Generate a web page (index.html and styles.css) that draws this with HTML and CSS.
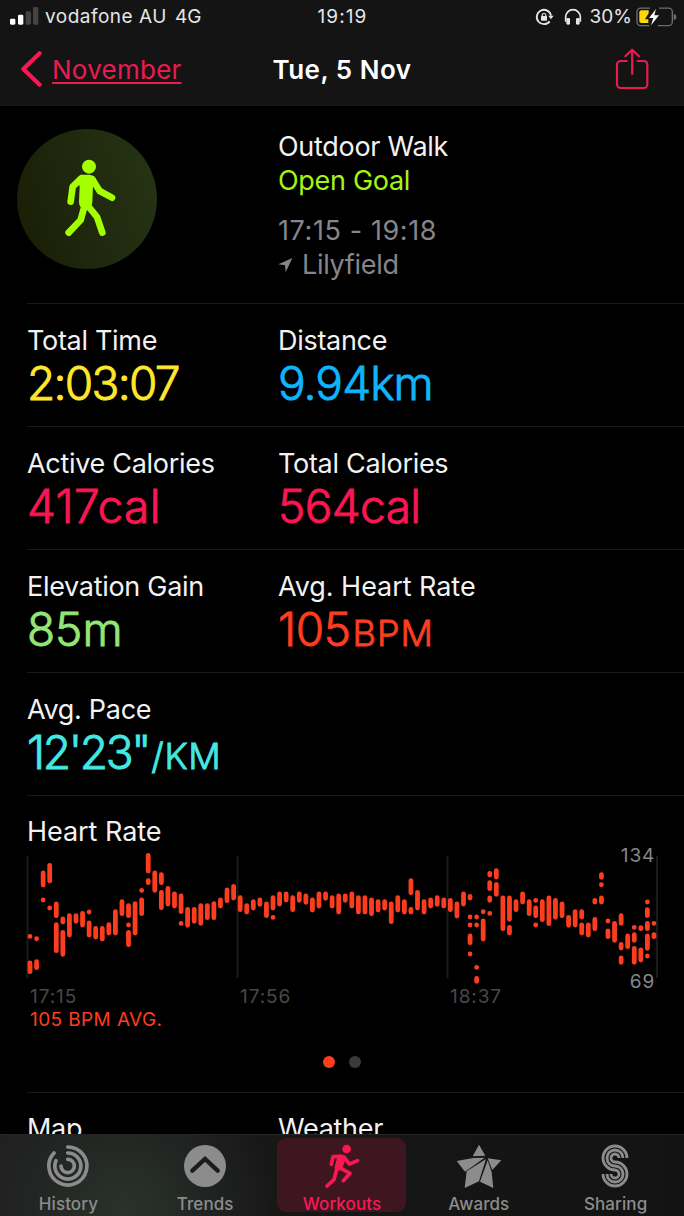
FILE: index.html
```html
<!DOCTYPE html>
<html lang="en">

<head>
    <meta charset="UTF-8">
    <meta name="viewport" content="width=device-width, initial-scale=1.0">
    <title>Outdoor Walk</title>
    <link rel="stylesheet" href="styles.css">
</head>

<body>
    <header>
        <div class="status">
            <div class="status-left">
                <svg class="signal" width="29" height="18" viewBox="0 0 87 54">
                    <rect x="0" y="35" width="16" height="18" rx="4" fill="#fff" />
                    <rect x="24" y="23" width="16" height="30" rx="4" fill="#fff" />
                    <rect x="47" y="13" width="16" height="40" rx="4" fill="#434343" />
                    <rect x="69" y="0" width="16" height="53" rx="4" fill="#434343" />
                </svg>
                <span class="carrier">vodafone AU</span>
                <span class="network">4G</span>
            </div>
            <span class="clock">19:19</span>
            <div class="status-right">
                <svg class="lock" width="19" height="18" viewBox="578 23 57 54" fill="none" stroke="#e6e6e6" stroke-width="5.500">
                    <path d="M626 46A21.500 21.500 0 1 0 622 63" />
                    <path d="M618 46h16l-8 11z" fill="#e6e6e6" stroke="none" />
                    <rect x="596" y="47" width="18" height="14" rx="2" fill="#e6e6e6" stroke="none" />
                    <path d="M599.500 49v-4a5.500 5.500 0 0 1 11 0v4" stroke-width="3.500" />
                </svg>
                <svg class="phones" width="18" height="18" viewBox="664 23 54 54" fill="none" stroke="#e6e6e6" stroke-width="5">
                    <path d="M669 64V50a22 22 0 0 1 44 0v14" />
                    <rect x="671" y="53" width="11" height="20" rx="4" fill="#e6e6e6" stroke="none" />
                    <rect x="700" y="53" width="11" height="20" rx="4" fill="#e6e6e6" stroke="none" />
                </svg>
                <span class="percent">30%</span>
                <svg width="41" height="20" viewBox="879 20 123 60">
                    <path d="M921 23.500H893a11 11 0 0 0-11 11V65a11 11 0 0 0 11 11h26M948 23.500h29a11 11 0 0 1 11 11V65a11 11 0 0 1-11 11h-32" fill="none" stroke="#6e6e6e" stroke-width="4" />
                    <path d="M992 41q8 1 8 9t-8 9z" fill="#6e6e6e" />
                    <path d="M895 30h22v9l-11 18h10v11h-21q-6 0-6-6V36q0-6 6-6z" fill="#ffd60a" />
                    <path d="M939 26l-21 27h13l-7 22 24-30h-14z" fill="#fff" />
                </svg>
            </div>
        </div>
        <nav>
            <a class="back" href="#">
                <svg width="21" height="36" viewBox="64 156 63 108">
                    <path d="M120 163L71 210l49 47" fill="none" stroke="#fa1852" stroke-width="12.500" stroke-linecap="round" stroke-linejoin="round" />
                </svg>
                <span>November</span>
            </a>
            <h1>Tue, 5 Nov</h1>
            <a class="share" href="#">
                <svg width="34" height="42" viewBox="818 144 102 126" fill="none" stroke="#e91c50" stroke-width="6.500" stroke-linecap="round" stroke-linejoin="round">
                    <path d="M853 183H835a11 11 0 0 0-11 11v59a11 11 0 0 0 11 11h69a11 11 0 0 0 11-11v-59a11 11 0 0 0-11-11H886" />
                    <path d="M869.500 222V150M849 169l20.500-20 20.500 20" />
                </svg>
            </a>
        </nav>
    </header>

    <main>
        <section class="summary">
            <svg class="badge" width="140" height="140" viewBox="51 42 420 420">
                <defs>
                    <linearGradient id="badgeFill" x1="0" y1="0.6" x2="1" y2="0.3">
                        <stop offset="0" stop-color="#1a1f06" />
                        <stop offset="1" stop-color="#263315" />
                    </linearGradient>
                </defs>
                <circle cx="261" cy="252" r="210" fill="url(#badgeFill)" />
                <g fill="#a4ff00">
                    <circle cx="267" cy="155" r="21" />
                    <path d="M244 179h24q14 1 20 13l-9 20-2 50q-1 14-14 18h-14q-12-3-12-20l2-45-8-26z" />
                </g>
                <g fill="none" stroke="#a4ff00" stroke-width="20" stroke-linecap="round" stroke-linejoin="round">
                    <path d="M244 190l-26 25-6 45" />
                    <path d="M277 193l22 35 37 20" />
                    <path d="M254 272l-12 43-36 38" />
                    <path d="M261 269l30 37 16 47" />
                </g>
            </svg>
            <div class="summary-text">
                <div class="label">Outdoor Walk</div>
                <div class="label goal">Open Goal</div>
                <div class="label when">17:15 - 19:18</div>
                <div class="label place">
                    <svg width="15" height="16" viewBox="0 0 45 48">
                        <path d="M43 3L1 22l20 3 2 21z" fill="#86868a" />
                    </svg>
                    <span>Lilyfield</span>
                </div>
            </div>
        </section>

        <section class="row">
            <div>
                <div class="label">Total Time</div>
                <div class="value time">2:03:07</div>
            </div>
            <div>
                <div class="label">Distance</div>
                <div class="value distance">9.94km</div>
            </div>
        </section>
        <section class="row">
            <div>
                <div class="label">Active Calories</div>
                <div class="value calories">417cal</div>
            </div>
            <div>
                <div class="label">Total Calories</div>
                <div class="value calories total">564cal</div>
            </div>
        </section>
        <section class="row">
            <div>
                <div class="label">Elevation Gain</div>
                <div class="value elevation">85m</div>
            </div>
            <div>
                <div class="label rate-label">Avg. Heart Rate</div>
                <div class="value bpm">105<small>BPM</small></div>
            </div>
        </section>
        <section class="row">
            <div>
                <div class="label">Avg. Pace</div>
                <div class="value pace">12'23"<small>/KM</small></div>
            </div>
        </section>

        <section class="heart">
            <div class="label rate-label">Heart Rate</div>
            <svg class="chart" width="640" height="162" viewBox="0 0 640 162">
                <path class="grid" d="M7.500 11V133M217.500 11V133M427.500 11V133M637 11V133" />
                <path id="beats" class="beats" />
                <text class="tick" x="10" y="158">17:15</text>
                <text class="tick" x="220" y="158">17:56</text>
                <text class="tick" x="430" y="158">18:37</text>
                <text class="bound" x="635" y="17" text-anchor="end">134</text>
                <text class="bound" x="635" y="143" text-anchor="end">69</text>
            </svg>
            <div class="average">105 BPM AVG.</div>
            <div class="pager"><i class="on"></i><i></i></div>
        </section>

        <section class="row more">
            <div class="label">Map</div>
            <div class="label">Weather</div>
        </section>
    </main>

    <footer>
        <a class="tab" href="#">
            <svg width="44" height="44" viewBox="139 177 132 132" fill="none" stroke="#8c8c8c" stroke-width="11" stroke-linecap="round">
                <path d="M204 186A57 57 0 1 1 163 204" />
                <path d="M204 204A39 39 0 1 1 169 227" />
                <path d="M204 223A20 20 0 1 1 184 243" />
            </svg>
            <span>History</span>
        </a>
        <a class="tab" href="#">
            <svg width="44" height="44" viewBox="550 177 132 132">
                <circle cx="616" cy="243" r="63" fill="#8c8c8c" />
                <path d="M578 257l38-35 38 35" fill="none" stroke="#1b1c1b" stroke-width="13" stroke-linecap="round" />
            </svg>
            <span>Trends</span>
        </a>
        <a class="tab active" href="#">
            <svg width="44" height="44" viewBox="27 22 132 132">
                <g fill="#fa1852">
                    <circle cx="107" cy="37" r="13" />
                    <path d="M80 54h16q10 2 10 10l-9 22-4 14-18 4-5-10 8-30z" />
                </g>
                <g fill="none" stroke="#fa1852" stroke-width="11" stroke-linecap="round" stroke-linejoin="round">
                    <path d="M88 59l-22 1-5 23" />
                    <path d="M100 63l15 19 25-10" />
                    <path d="M78 95l-9 34-21 19" />
                    <path d="M86 93l31 17-20 22" />
                </g>
            </svg>
            <span>Workouts</span>
        </a>
        <a class="tab" href="#">
            <svg width="46" height="44" viewBox="339 179 138 132" fill="#8c8c8c">
                <path d="M408 181l19 33-38 2z" />
                <path d="M341 230l50-9 34-1-59 42z" />
                <path d="M371 261l58-37-21 67-43 20z" />
                <path d="M434 228l12 36 5 47-40-19z" />
                <path d="M434 222l41 6-27 29z" />
            </svg>
            <span>Awards</span>
        </a>
        <a class="tab" href="#">
            <svg width="44" height="44" viewBox="754 178 132 132" fill="none" stroke="#8c8c8c" stroke-width="8.500">
                <path d="M853 220A36 36 0 1 0 817 256A12 12 0 1 1 805 268" />
                <path d="M841 220A24 24 0 1 0 817 244A24 24 0 1 1 793 268" />
                <path d="M829 220A12 12 0 1 0 817 232A36 36 0 1 1 781 268" />
            </svg>
            <span>Sharing</span>
        </a>
    </footer>

    <script src="chart.js"></script>
</body>

</html>
```

FILE: styles.css
```css
* {
    box-sizing: border-box;
}

body {
    margin: 0;
    width: 684px;
    height: 1216px;
    display: flex;
    flex-direction: column;
    overflow: hidden;
    background-color: #000;
    color: #f2f2f2;
    font-family: Inter, "Liberation Sans", sans-serif;
}

a {
    color: inherit;
    text-decoration: none;
}

svg {
    display: block;
    flex: none;
}

/* top bars */
header {
    height: 106px;
    background-color: #141414;
    border-bottom: 1px solid #191919;
    flex: none;
}

.status {
    display: grid;
    grid-template-columns: 1fr auto 1fr;
    align-items: center;
    height: 33px;
    padding: 0 7px 0 10px;
    font-size: 19px;
    color: #e6e6e6;
}

.status-left,
.status-right {
    display: flex;
    align-items: center;
}

.status-right {
    justify-content: flex-end;
}

.signal {
    margin-right: 6px;
    margin-top: -1px;
}

.carrier {
    letter-spacing: 0.5px;
    margin-right: 8px;
}

.clock {
    margin-right: 2px;
    letter-spacing: 1.1px;
}

.phones {
    margin: 0 8px 0 10px;
}

.percent {
    margin-right: 4px;
}

nav {
    display: grid;
    grid-template-columns: 1fr auto 1fr;
    align-items: center;
    height: 72px;
    padding: 0 35px 0 21px;
}

.back {
    display: flex;
    align-items: center;
    gap: 10px;
    color: #e91c50;
    font-size: 26px;
    letter-spacing: 0.25px;
    text-decoration: underline;
    text-decoration-thickness: 2px;
    text-underline-offset: 3px;
}

h1 {
    margin: 0 0 0 14px;
    font-size: 26px;
    font-weight: 600;
    letter-spacing: 0.5px;
    color: #fff;
}

.share {
    justify-self: end;
}

/* workout details */
main {
    flex: 1;
    min-height: 0;
    overflow: hidden;
}

.summary {
    display: flex;
    height: 197px;
    padding: 23px 0 0 17px;
}

.summary-text {
    margin: 1px 0 0 121px;
}

.label {
    font-size: 27px;
    line-height: 34px;
    letter-spacing: -0.3px;
    white-space: nowrap;
}

.goal {
    color: #a4f50f;
}

.when {
    margin-top: 16px;
    letter-spacing: 0.6px;
    color: #86868a;
}

.place {
    display: flex;
    align-items: center;
    gap: 9px;
    color: #86868a;
}

.rate-label {
    letter-spacing: -0.05px;
}

.row {
    display: grid;
    grid-template-columns: 251px 1fr;
    height: 123px;
    margin-left: 27px;
    padding-top: 20px;
    border-top: 1px solid #191919;
}

.row.more {
    padding-top: 19px;
}

.value {
    margin-top: -1px;
    font-size: 46px;
    font-weight: 300;
    line-height: 52px;
    white-space: nowrap;
    -webkit-text-stroke: 0.9px currentColor;
}

.value small {
    font-size: 36px;
    letter-spacing: 1px;
    margin-left: 2px;
}

.time {
    letter-spacing: -1.7px;
    color: #ffe62e;
}

.distance {
    letter-spacing: -0.9px;
    color: #0fb4fc;
}

.calories {
    letter-spacing: 0.3px;
    color: #fa1652;
}

.calories.total {
    letter-spacing: -0.6px;
}

.elevation {
    color: #93e676;
}

.bpm {
    letter-spacing: -0.4px;
    color: #fc3d20;
}

.pace {
    letter-spacing: -2.3px;
    color: #43e8e3;
}

.pace small {
    letter-spacing: 0.6px;
}

/* heart rate graph */
.heart {
    height: 297px;
    margin-left: 27px;
    padding-top: 19px;
    border-top: 1px solid #191919;
}

.chart {
    margin: -4px 0 0 -7px;
}

.grid {
    stroke: #1b1b1b;
    stroke-width: 2;
}

.beats {
    fill: none;
    stroke: #fc3d20;
    stroke-width: 4.8;
    stroke-linecap: round;
}

.tick {
    fill: #48484a;
    font-size: 19px;
    letter-spacing: 0.9px;
}

.bound {
    fill: #86868a;
    font-size: 19px;
    letter-spacing: 0.8px;
}

.average {
    margin-left: 3px;
    font-size: 19px;
    line-height: 26px;
    letter-spacing: 0.4px;
    color: #fc3d20;
}

.pager {
    display: flex;
    justify-content: center;
    gap: 14px;
    margin: 23px 28px 0 0;
}

.pager i {
    width: 12px;
    height: 12px;
    border-radius: 50%;
    background-color: #3a3a3c;
}

.pager .on {
    background-color: #fc3d20;
}

/* tab bar */
footer {
    display: grid;
    grid-template-columns: repeat(5, 1fr);
    flex: none;
    height: 82px;
    padding-top: 3px;
    border-top: 1px solid #262626;
    background: radial-gradient(circle at 125px 75px, #2a322c 0, rgba(42, 50, 44, 0) 150px), linear-gradient(90deg, #1f1f1f, #161616 45%, #131313);
}

.tab {
    display: flex;
    flex-direction: column;
    align-items: center;
    justify-self: center;
    width: 129px;
    height: 74px;
    padding-top: 6px;
    border-radius: 9px;
    font-size: 17px;
    font-weight: 500;
    line-height: 20px;
    color: #8c8c8c;
}

.tab span {
    margin-top: 6px;
    letter-spacing: 0.1px;
}

.tab.active {
    background-color: #3d1620;
    color: #fa1852;
}
```

FILE: chart.js
```js
// one entry per column, values are pairs of top / bottom (a third of a pixel each)
var beats = [
    [267, 281, 347, 387], [274, 288, 343, 375], [77, 127, 158, 172], [54, 115, 182, 196],
    [170, 219, 232, 324], [215, 238, 255, 335], [205, 277], [205, 236],
    [198, 247], [194, 208, 227, 277], [243, 283], [243, 289],
    [232, 271], [193, 271], [163, 213], [175, 219, 233, 247, 255, 306],
    [169, 271], [129, 143, 158, 213], [24, 85, 100, 120], [77, 143],
    [82, 120, 135, 195], [123, 184], [140, 190], [146, 207, 228, 242],
    [186, 248], [186, 236], [175, 242], [175, 225],
    [169, 225], [158, 190], [128, 174], [117, 166],
    [151, 201], [175, 208], [163, 196], [158, 185],
    [170, 219], [151, 196, 210, 224], [140, 184], [140, 172],
    [151, 201], [140, 173], [146, 179], [158, 202],
    [140, 190], [140, 167], [151, 190], [146, 208],
    [146, 173], [140, 190], [151, 208], [151, 208],
    [158, 213], [163, 202], [163, 196], [170, 237],
    [151, 202], [163, 208], [100, 150, 186, 208], [135, 196],
    [163, 208], [158, 190], [151, 185], [158, 190],
    [159, 201], [170, 220], [140, 184], [147, 166, 209, 223, 233, 247, 266, 300, 320, 334],
    [209, 223, 233, 247, 360, 374, 393, 416], [193, 207, 221, 289], [78, 97, 106, 138, 152, 173, 198, 212], [70, 103, 111, 155],
    [152, 258], [152, 230, 240, 271], [163, 201], [140, 178],
    [163, 213], [159, 173, 182, 219, 233, 247], [163, 231], [152, 243],
    [159, 224], [170, 219], [210, 248], [193, 247],
    [193, 223, 233, 271], [233, 277], [159, 178, 216, 258], [82, 104, 112, 126, 152, 178],
    [221, 235, 251, 282], [228, 293], [205, 242, 291, 316, 332, 359], [266, 312],
    [240, 254, 262, 293, 303, 359], [241, 258, 308, 352], [164, 178, 187, 219, 228, 258, 266, 317, 326, 340], [228, 242, 262, 282]
];

var path = "";

beats.forEach(function (column, i) {
    var x = (10 + i * 6.568).toFixed(2);
    for (var j = 0; j < column.length; j += 2) {
        // the round caps add 2.4px at each end
        var top = column[j] / 3 + 2.3;
        var bottom = Math.max(column[j + 1] / 3 - 2.3, top + 0.1);
        path += "M" + x + " " + top.toFixed(2) + "V" + bottom.toFixed(2);
    }
});

document.getElementById("beats").setAttribute("d", path);
```
